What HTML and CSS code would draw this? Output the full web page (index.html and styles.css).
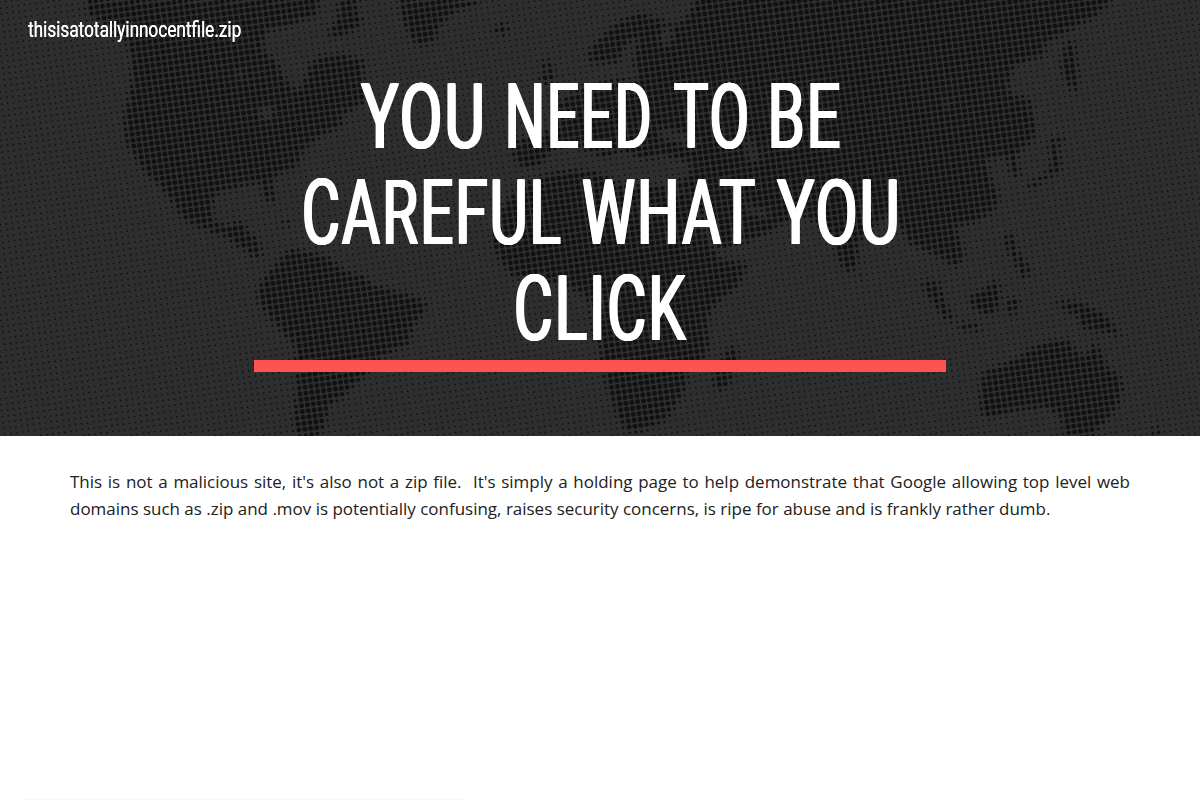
FILE: index.html
```html
<!DOCTYPE html>
<html lang="en">
<head>
<meta charset="utf-8">
<title>thisisatotallyinnocentfile.zip</title>
<link rel="stylesheet" href="styles.css">
</head>
<body>
<header class="hero">
  <canvas class="hero-map" width="1200" height="436"></canvas>
  <a class="site-name"><span class="fit" data-width="213">thisisatotallyinnocentfile.zip</span></a>
  <div class="hero-title">
    <h1 class="title">
      <span class="line"><span class="fit" data-width="122">YOU</span> <span class="fit gap-a" data-width="142">NEED</span> <span class="fit gap-b" data-width="73">TO</span> <span class="fit gap-b" data-width="69">BE</span></span>
      <span class="line"><span class="fit" data-width="257">CAREFUL</span> <span class="fit gap-c" data-width="173">WHAT</span> <span class="fit gap-c" data-width="121">YOU</span></span>
      <span class="line last"><span class="fit" data-width="171">CLICK</span></span>
    </h1>
    <div class="rule"></div>
  </div>
</header>
<main class="content">
  <p class="copy">This is not a malicious site, it's also not a zip file.&nbsp; It's simply a holding page to help demonstrate that Google allowing top level web domains such as .zip and .mov is potentially confusing, raises security concerns, is ripe for abuse and is frankly rather dumb.</p>
</main>
<div class="notice"></div>
<script src="script.js"></script>
</body>
</html>
```
FILE: styles.css
```css
* { box-sizing: border-box; }
html, body { height: 100%; }
body {
  margin: 0;
  overflow: hidden;
  background: #fff;
  color: #212121;
  font-family: "Open Sans", sans-serif;
}
.hero {
  position: relative;
  height: 436px;
  background: #2e2e2e;
  color: #fff;
  font-family: Roboto, sans-serif;
}
.hero-map { position: absolute; inset: 0; }
.site-name {
  position: relative;
  display: block;
  height: 60px;
  padding: 0 28px;
  font-size: 21.5px;
  font-weight: 400;
  line-height: 60px;
}
.site-name .fit > span { text-shadow: 0.3px 0 0 #fff; }
.hero-title {
  position: relative;
  width: 692px;
  margin: 0 auto;
  padding-top: 9px;
}
.title {
  display: flex;
  flex-direction: column;
  height: 291px;
  margin: 0;
  font-size: 90.5px;
  font-weight: 400;
  line-height: 96px;
}
.line {
  display: flex;
  justify-content: center;
  height: 96px;
}
.last { padding-left: 3px; }
.fit { display: block; white-space: nowrap; }
.fit > span {
  display: inline-block;
  transform-origin: 0 50%;
}
.title .fit > span {
  letter-spacing: 3px;
  text-shadow: 0.9px 0 0 #fff, -0.9px 0 0 #fff, 1.8px 0 0 #fff, -1.8px 0 0 #fff;
}
.gap-a { margin-left: 26px; }
.gap-b { margin-left: 24px; }
.gap-c { margin-left: 21px; }
.rule { height: 12px; background: #ff5252; }
.content {
  height: 363px;
  padding: 32px 70px 0;
}
.copy {
  margin: 0;
  font-size: 16.98px;
  line-height: 27px;
  text-align: justify;
}
.notice {
  width: 436px;
  height: 1px;
  margin-left: 26px;
  background: #f6f6f6;
  box-shadow: 0 0 2px rgba(0, 0, 0, 0.05);
}
```
FILE: script.js
```js
// Condense each word to its column width, measured on its ink.
const pen = document.createElement("canvas").getContext("2d");
document.querySelectorAll(".fit").forEach((box) => {
  const style = getComputedStyle(box);
  const target = Number(box.dataset.width);
  const heading = box.closest(".title");
  const bold = heading ? 1.8 : 0;
  const tracking = heading ? 3 * (box.textContent.length - 1) : 0;
  pen.font = `${style.fontWeight} ${style.fontSize} Roboto`;
  const ink = pen.measureText(box.textContent);
  const left = ink.actualBoundingBoxLeft + bold;
  const scale = target / (left + ink.actualBoundingBoxRight + bold + tracking);
  const inner = document.createElement("span");
  inner.textContent = box.textContent;
  inner.style.transform = `translateX(${left * scale}px) scaleX(${scale})`;
  box.style.width = `${target}px`;
  box.replaceChildren(inner);
});

// Halftone world map: coastlines become a soft mask that sets each dot's size.
const land = [
  "88,0 88,14 125,38 132,55 133,80 125,115 126,140 142,168 152,178 165,190 183,217 192,223 210,232 228,238 240,246 250,252 254,259 262,256 260,246 258,238 248,234 244,222 228,226 212,222 212,200 220,192 243,186 262,182 265,200 273,203 276,200 272,182 280,173 297,167 305,148 316,140 328,132 345,125 340,116 358,106 372,100 366,85 362,72 366,62 345,55 322,56 310,65 305,82 300,90 292,88 282,73 275,60 265,52 262,40 270,30 285,28 300,22 318,14 320,0",
  "340,0 355,0 358,15 365,22 350,32 340,38 328,35 338,20",
  "400,0 403,20 408,30 412,40 422,47 435,40 440,25 455,12 475,5 480,0",
  "495,27 508,24 508,34 497,34", "281,222 290,221 290,227 285,228",
  "278,263 290,250 305,252 325,256 340,268 345,272 365,276 372,285 395,292 418,298 428,305 422,315 412,330 408,345 390,352 375,362 368,372 355,385 340,400 330,405 325,425 318,436 298,436 295,425 296,405 298,380 296,345 285,335 274,322 264,310 258,298 262,282",
  "540,178 565,171 595,172 620,185 650,187 685,190 700,212 712,235 722,250 745,243 765,235 780,225 800,215 820,225 832,233 840,262 848,273 856,270 858,245 870,228 885,218 900,225 912,245 925,250 945,260 955,268 965,257 960,240 955,227 975,222 990,215 1000,200 992,180 985,160 1008,157 1011,175 1022,178 1016,160 1020,150 1035,140 1035,125 1030,100 1012,95 1008,85 1015,65 1043,57 1045,45 1070,30 1090,20 1110,3 1112,-5 700,-5 690,14 678,26 660,20 640,13 620,22 600,40 590,50 590,64 618,63 625,46 640,35 634,60 640,82 620,80 600,85 575,92 558,105 558,128 520,140 513,155 522,167 540,167 552,150 575,145 605,158 620,150 645,160 660,155 690,162 690,178 660,187 690,195 706,236 720,260 748,264 745,272 735,290 715,305 706,325 710,345 705,358 687,374 685,390 675,408 665,420 645,430 628,433 620,420 610,395 605,375 600,345 592,320 590,300 578,290 560,284 530,280 510,275 500,258 492,245 498,225 505,205 520,184",
  "542,62 550,61 556,82 542,86 540,78 546,73",
  "1066,42 1074,42 1079,80 1076,92 1070,88 1062,70",
  "1050,140 1066,136 1058,148 1062,170 1045,180 1032,190 1028,185 1050,172 1053,160",
  "1005,235 1014,235 1015,250 1022,255 1032,275 1022,279 1016,262 1008,250",
  "920,282 940,282 945,305 956,320 948,322 935,305", "957,323 980,325 981,331 962,330",
  "970,298 985,290 998,280 1000,300 995,313 985,315 973,308",
  "1008,300 1020,298 1016,315 1008,315", "1055,300 1065,302 1082,304 1100,312 1110,320 1122,337 1108,332 1095,331 1083,328 1078,315 1068,312",
  "983,374 1000,366 1020,358 1030,350 1050,342 1068,341 1075,350 1085,358 1092,350 1095,340 1101,355 1110,370 1118,375 1124,385 1120,400 1112,415 1102,425 1092,436 1068,436 1060,415 1045,407 1020,410 990,418 982,415 981,395",
  "1154,425 1158,430 1163,436 1153,436", "735,345 738,358 730,385 720,391 713,382 718,370 724,355", "857,277 864,275 861,281"
];
const water = [
  "258,109 274,106 272,122 262,118", "660,127 697,138 697,146 660,140", "744,140 753,140 760,163 749,161",
  "745,204 770,212 766,219 748,213", "945,101 950,101 950,108 945,108", "666,20 675,35 668,48 660,40",
  "238,70 244,72 243,79 237,77"
];

const canvas = document.querySelector(".hero-map");
const { width, height } = canvas;
const sheet = document.createElement("canvas");
sheet.width = width;
sheet.height = height;
const mask = sheet.getContext("2d");
mask.fillStyle = "#000";
mask.fillRect(0, 0, width, height);
mask.filter = "blur(2.4px)";
const fill = (shapes, color) => {
  mask.fillStyle = color;
  shapes.forEach((points) => {
    mask.beginPath();
    points.split(" ").forEach((p) => mask.lineTo(...p.split(",").map(Number)));
    mask.fill();
  });
};
fill(land, "#fff");
fill(water, "#000");
const level = mask.getImageData(0, 0, width, height).data;

const ctx = canvas.getContext("2d");
const pitch = 5.955;
const angle = (7.8 * Math.PI) / 180;
const cos = Math.cos(angle) * pitch;
const sin = Math.sin(angle) * pitch;
ctx.fillStyle = "#111";
for (let i = -220; i < 60; i++) {
  for (let j = -50; j < 110; j++) {
    const x = 1070 + i * cos + j * sin;
    const y = 48 - i * sin + j * cos;
    if (x < -3 || y < -3 || x > width + 3 || y > height + 3) continue;
    const px = Math.min(width - 1, Math.max(0, Math.round(x)));
    const py = Math.min(height - 1, Math.max(0, Math.round(y)));
    const tone = level[(py * width + px) * 4] / 255;
    ctx.beginPath();
    ctx.arc(x, y, 0.86 + 1.56 * Math.pow(tone, 0.8), 0, Math.PI * 2);
    ctx.fill();
  }
}
```
